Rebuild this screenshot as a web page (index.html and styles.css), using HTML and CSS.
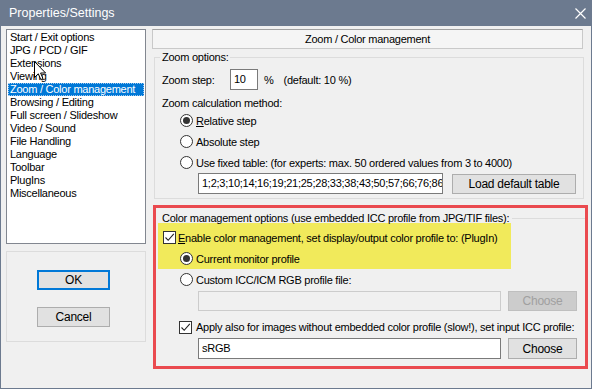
FILE: index.html
```html
<!DOCTYPE html>
<html lang="en">
<head>
    <meta charset="UTF-8">
    <title>Properties/Settings</title>
    <link rel="stylesheet" href="styles.css">
</head>
<body>
    <div class="window">
        <div class="titlebar">
            <span class="title">Properties/Settings</span>
            <svg class="close" width="11" height="11" viewBox="0 0 11 11">
                <path d="M0.5 0.5 L10.5 10.5 M10.5 0.5 L0.5 10.5" stroke="#fff" stroke-width="1.2" fill="none"/>
            </svg>
        </div>

        <div class="content">
            <div class="sidebar">
                <ul class="list">
                    <li>Start / Exit options</li>
                    <li>JPG / PCD / GIF</li>
                    <li>Extensions</li>
                    <li>Viewing</li>
                    <li class="sel">Zoom / Color management</li>
                    <li>Browsing / Editing</li>
                    <li>Full screen / Slideshow</li>
                    <li>Video / Sound</li>
                    <li>File Handling</li>
                    <li>Language</li>
                    <li>Toolbar</li>
                    <li>PlugIns</li>
                    <li>Miscellaneous</li>
                </ul>
                <div class="btn-panel">
                    <button class="btn btn-ok">OK</button>
                    <button class="btn btn-ok-size">Cancel</button>
                </div>
            </div>

            <div class="main">
                <div class="page-title">Zoom / Color management</div>

                <div class="group">
                    <div class="group-title">Zoom options:</div>
                    <div class="step-row">
                        <span class="step-label">Zoom step:</span>
                        <div class="field step-field">10</div>
                        <span class="pct">%</span>
                        <span class="hint">(default: 10 %)</span>
                    </div>
                    <div class="method">Zoom calculation method:</div>
                    <div class="opt"><span class="radio on"></span><span><u>R</u>elative step</span></div>
                    <div class="opt"><span class="radio"></span><span>Absolute step</span></div>
                    <div class="opt"><span class="radio"></span><span>Use fixed table: (for experts: max. 50 ordered values from 3 to 4000)</span></div>
                    <div class="table-row">
                        <div class="field table-field">1;2;3;10;14;16;19;21;25;28;33;38;43;50;57;66;76;86;100</div>
                        <button class="btn btn-load">Load default table</button>
                    </div>
                </div>

                <div class="cm-box">
                    <div class="cm-head">
                        <span>Color management options (use embedded ICC profile from JPG/TIF files):</span>
                        <span class="cm-line"></span>
                    </div>
                    <div class="highlight">
                        <div class="chk-row enable-row">
                            <span class="check">
                                <svg width="11" height="11" viewBox="0 0 11 11"><path d="M1.5 5.5 L4.2 8.3 L9.8 1.8" stroke="#222" stroke-width="1.1" fill="none"/></svg>
                            </span>
                            <span><u>E</u>nable color management, set display/output color profile to: (PlugIn)</span>
                        </div>
                        <div class="opt monitor-opt"><span class="radio on"></span><span>Current monitor profile</span></div>
                    </div>
                    <div class="opt custom-opt"><span class="radio"></span><span>Custom ICC/ICM RGB profile file:</span></div>
                    <div class="file-row">
                        <div class="field file-field disabled"></div>
                        <button class="btn btn-choose" disabled>Choose</button>
                    </div>
                    <div class="chk-row apply-row">
                        <span class="check">
                            <svg width="11" height="11" viewBox="0 0 11 11"><path d="M1.5 5.5 L4.2 8.3 L9.8 1.8" stroke="#222" stroke-width="1.1" fill="none"/></svg>
                        </span>
                        <span>Apply also for images without embedded color profile (slow!), set input ICC profile:</span>
                    </div>
                    <div class="file-row srgb-row">
                        <div class="field file-field">sRGB</div>
                        <button class="btn btn-choose">Choose</button>
                    </div>
                </div>
            </div>
        </div>

        <!-- mouse pointer resting over the list -->
        <svg class="cursor" width="13" height="20" viewBox="0 0 13 20">
            <path d="M0.5 0.5 L0.5 16.5 L4.3 12.8 L6.8 18.6 L9 17.6 L6.6 12 L11.6 12 Z" fill="#fff" stroke="#000" stroke-width="1"/>
        </svg>
    </div>
</body>
</html>
```

FILE: styles.css
```css
body {
    margin: 0;
    font-family: "Liberation Sans", Arial, sans-serif;
    font-size: 11px;
    letter-spacing: -0.25px;
    color: #000;
}
.window {
    position: relative;
    width: 592px;
    height: 389px;
    box-sizing: border-box;
    background: #f0f0f0;
    border: 1px solid #6c7a8f;
    border-top: 0;
    overflow: hidden;
}
.titlebar {
    height: 26px;
    background: #6c7a8f;
    color: #fff;
    display: flex;
    align-items: center;
    justify-content: space-between;
    padding: 0 5px 0 8px;
}
.title {
    font-size: 12.5px;
    letter-spacing: 0;
}
.close {
    display: block;
}
.content {
    display: flex;
    gap: 6px;
    padding: 3px 0 0 5px;
}

/* left column */
.sidebar {
    width: 140px;
    display: flex;
    flex-direction: column;
    gap: 7px;
}
.list {
    height: 215px;
    box-sizing: border-box;
    margin: 0;
    padding: 1px;
    list-style: none;
    background: #fff;
    border: 1px solid #828790;
}
.list li {
    height: 13px;
    line-height: 13px;
    padding-left: 2px;
    white-space: nowrap;
}
.list li.sel {
    background: #0078d7;
    color: #fff;
    outline: 1px dotted #9fc8ee;
    outline-offset: -1px;
}
.btn-panel {
    height: 91px;
    box-sizing: border-box;
    border: 1px solid #dcdcdc;
    display: flex;
    flex-direction: column;
    align-items: flex-start;
    gap: 17px;
    padding: 18px 0 0 30px;
}
.btn {
    height: 20px;
    box-sizing: border-box;
    padding: 0;
    border: 1px solid #adadad;
    background: #e1e1e1;
    font: inherit;
    letter-spacing: inherit;
    color: #000;
}
.btn-ok,
.btn-ok-size {
    width: 73px;
    font-size: 12px;
}
.btn-ok {
    border-color: #0078d7;
    box-shadow: inset 0 0 0 1px #0078d7;
}

/* right column */
.main {
    width: 432px;
}
.page-title {
    width: 431px;
    height: 20px;
    box-sizing: border-box;
    border: 1px solid #c9c9c9;
    border-top-color: #a0a0a0;
    background: #f5f5f5;
    text-align: center;
    line-height: 18px;
}
.group {
    margin: 8px 0 0 2px;
    border: 1px solid #dcdcdc;
    padding: 0 0 4px 7px;
}
.group-title {
    width: fit-content;
    margin: -8px 0 0 -2px;
    padding: 0 2px;
    line-height: 14px;
    background: #f0f0f0;
}
.step-row {
    display: flex;
    align-items: center;
    height: 21px;
    margin-top: 5px;
}
.step-label {
    width: 68px;
}
.field {
    height: 21px;
    box-sizing: border-box;
    border: 1px solid #7a7a7a;
    background: #fff;
    padding-left: 3px;
    line-height: 19px;
    white-space: nowrap;
    overflow: hidden;
}
.step-field {
    width: 28px;
}
.pct {
    margin-left: 6px;
}
.hint {
    margin-left: 10px;
}
.method {
    margin-top: 6px;
    line-height: 14px;
}
.opt {
    display: flex;
    align-items: center;
    height: 21px;
    padding-left: 18px;
    white-space: nowrap;
}
.radio {
    width: 13px;
    height: 13px;
    box-sizing: border-box;
    border: 1px solid #333;
    border-radius: 50%;
    background: #fff;
    margin-right: 3px;
    display: flex;
    align-items: center;
    justify-content: center;
    flex: none;
}
.radio.on::after {
    content: "";
    width: 7px;
    height: 7px;
    border-radius: 50%;
    background: #333;
}
.table-row {
    display: flex;
    align-items: center;
    gap: 9px;
    height: 21px;
    padding-left: 36px;
}
.table-field {
    width: 245px;
}
.btn-load {
    width: 124px;
    font-size: 12px;
}

/* colour management box, outlined in red */
.cm-box {
    width: 435px;
    height: 164px;
    box-sizing: border-box;
    margin: 6px 0 0 1px;
    border: 3px solid #ea4a4f;
}
.cm-head {
    display: flex;
    align-items: flex-start;
    height: 15px;
    box-sizing: border-box;
    padding: 3px 0 0 6px;
    line-height: 14px;
    white-space: nowrap;
}
.cm-line {
    flex: 1;
    margin: 7px 0 0 3px;
    border-top: 1px solid #dcdcdc;
}
.highlight {
    width: 353px;
    height: 46px;
    box-sizing: border-box;
    margin-left: 2px;
    padding-top: 4px;
    background: #f1ea5b;
}
.chk-row {
    display: flex;
    align-items: center;
    white-space: nowrap;
}
.enable-row {
    height: 21px;
    padding-left: 5px;
}
.enable-row .check {
    margin-right: 2px;
}
.check {
    width: 13px;
    height: 13px;
    box-sizing: border-box;
    border: 1px solid #333;
    background: #fff;
    flex: none;
    display: flex;
    align-items: center;
    justify-content: center;
}
.check svg {
    display: block;
}
.monitor-opt {
    padding-left: 22px;
}
.custom-opt {
    padding-left: 24px;
}
.file-row {
    display: flex;
    align-items: center;
    gap: 7px;
    height: 21px;
    padding-left: 42px;
}
.file-field {
    width: 303px;
}
.file-field.disabled {
    height: 20px;
    border-color: #cccccc;
    background: #f0f0f0;
}
.btn-choose {
    width: 69px;
    font-size: 12px;
}
.btn-choose:disabled {
    border-color: #bfbfbf;
    background: #cccccc;
    color: #a0a0a0;
}
.apply-row {
    height: 20px;
    margin-top: 6px;
    padding-left: 23px;
}
.apply-row .check {
    margin-right: 4px;
}
.srgb-row {
    margin-top: 1px;
}
.srgb-row .btn-choose {
    height: 21px;
}

.cursor {
    position: absolute;
    left: 33px;
    top: 61px;
}
```
